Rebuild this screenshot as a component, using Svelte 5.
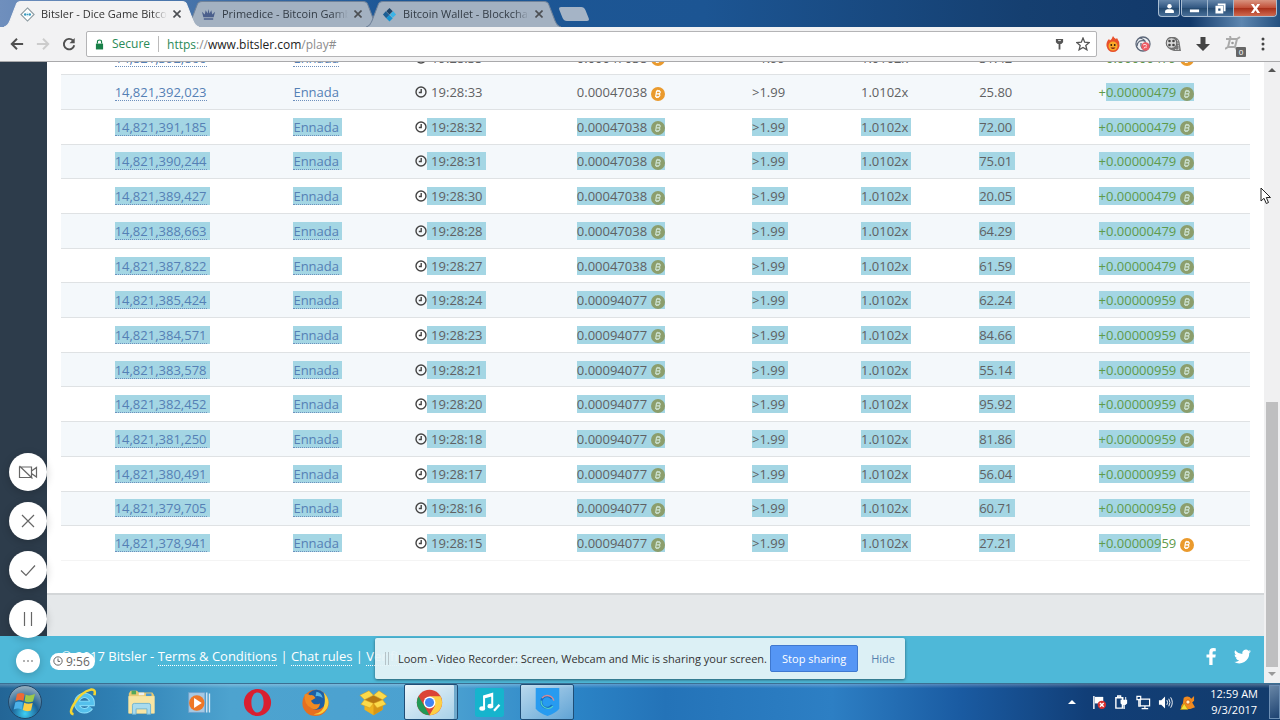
<script lang="ts">
    const rows = [
        { id: "14,821,392,866", time: "19:28:35", amount: "0.00047038", roll: "31.42", profit: "0.00000479", picked: "none" },
        { id: "14,821,392,023", time: "19:28:33", amount: "0.00047038", roll: "25.80", profit: "0.00000479", picked: "end" },
        { id: "14,821,391,185", time: "19:28:32", amount: "0.00047038", roll: "72.00", profit: "0.00000479", picked: "all" },
        { id: "14,821,390,244", time: "19:28:31", amount: "0.00047038", roll: "75.01", profit: "0.00000479", picked: "all" },
        { id: "14,821,389,427", time: "19:28:30", amount: "0.00047038", roll: "20.05", profit: "0.00000479", picked: "all" },
        { id: "14,821,388,663", time: "19:28:28", amount: "0.00047038", roll: "64.29", profit: "0.00000479", picked: "all" },
        { id: "14,821,387,822", time: "19:28:27", amount: "0.00047038", roll: "61.59", profit: "0.00000479", picked: "all" },
        { id: "14,821,385,424", time: "19:28:24", amount: "0.00094077", roll: "62.24", profit: "0.00000959", picked: "all" },
        { id: "14,821,384,571", time: "19:28:23", amount: "0.00094077", roll: "84.66", profit: "0.00000959", picked: "all" },
        { id: "14,821,383,578", time: "19:28:21", amount: "0.00094077", roll: "55.14", profit: "0.00000959", picked: "all" },
        { id: "14,821,382,452", time: "19:28:20", amount: "0.00094077", roll: "95.92", profit: "0.00000959", picked: "all" },
        { id: "14,821,381,250", time: "19:28:18", amount: "0.00094077", roll: "81.86", profit: "0.00000959", picked: "all" },
        { id: "14,821,380,491", time: "19:28:17", amount: "0.00094077", roll: "56.04", profit: "0.00000959", picked: "all" },
        { id: "14,821,379,705", time: "19:28:16", amount: "0.00094077", roll: "60.71", profit: "0.00000959", picked: "all" },
        { id: "14,821,378,941", time: "19:28:15", amount: "0.00094077", roll: "27.21", profit: "0.00000959", picked: "start" },
    ];

    const tabs = [
        { title: "Bitsler - Dice Game Bitcoin", icon: "bitsler", active: true },
        { title: "Primedice - Bitcoin Gambling", icon: "crown", active: false },
        { title: "Bitcoin Wallet - Blockchain", icon: "blockchain", active: false },
    ];

    const url = "https://www.bitsler.com/play#";
</script>

{#snippet coin(dim: boolean)}
    <svg class="coin" class:dim viewBox="0 0 14 14" aria-hidden="true">
        <circle cx="7" cy="7" r="7" />
        <path
            d="M5.6 3.8 L4.6 10 M5.4 4.2 H8 Q9.6 4.4 9.1 5.8 Q8.7 6.8 7.4 6.9 H5.3 M7.4 6.9 Q9.3 7.2 8.7 8.7 Q8.2 9.8 6.8 9.8 H4.7 M6.8 2.9 L6.6 4 M8.2 3 L8 4.2 M5.8 9.8 L5.6 11 M7.2 9.8 L7 11"
        />
    </svg>
{/snippet}

<div class="screen">
    <header class="titlebar">
        <nav class="tabs" aria-label="Tabs">
            {#each tabs as tab}
                <div class="tab" class:active={tab.active}>
                    <svg class="tab-shape" viewBox="0 0 195 25" preserveAspectRatio="none" aria-hidden="true">
                        <path d="M0 25 Q4 24 6 19 L12 4 Q13 0.5 17 0.5 H178 Q182 0.5 183 4 L189 19 Q191 24 195 25" />
                    </svg>
                    <svg class="favicon" viewBox="0 0 16 16" aria-hidden="true">
                        {#if tab.icon === "bitsler"}
                            <path d="M8 1 L15 8 L8 15 L1 8 Z" fill="#fff" stroke="#8c9aa0" stroke-width="1.2" />
                            <path d="M8 5 L11.5 8 L8 11 L4.5 8 Z" fill="#e4f3f8" />
                            <circle cx="5.5" cy="8" r="1.3" fill="#3d9cc0" />
                            <circle cx="10.5" cy="8" r="1.3" fill="#3d9cc0" />
                            <circle cx="8" cy="8" r="0.8" fill="#3d9cc0" />
                        {:else if tab.icon === "crown"}
                            <path
                                d="M1 5 L4 8 L5 3.5 L7 7 L8 2 L9 7 L11 3.5 L12 8 L15 5 L13.5 11 H2.5 Z M3 12 H13 V13.5 H3 Z"
                                fill="#4b5f8c"
                            />
                        {:else}
                            <path d="M8 1 L11.5 4.5 L8 8 L4.5 4.5 Z" fill="#1f4467" />
                            <path d="M4 4.5 L8 8.5 L4.5 12 L1 8 Z" fill="#1d5f94" />
                            <path d="M12 4.5 L15 8 L11.5 11.5 L8.5 8 Z" fill="#3cb4e6" />
                            <path d="M8 8.5 L11.5 12 L8 15.5 L4.5 12 Z" fill="#1593d2" />
                        {/if}
                    </svg>
                    <span class="tab-title">{tab.title}</span>
                    <button class="tab-close" aria-label="Close tab">
                        <svg viewBox="0 0 8 8"><path d="M0.5 0.5 L7.5 7.5 M7.5 0.5 L0.5 7.5" /></svg>
                    </button>
                </div>
            {/each}
            <button class="new-tab" aria-label="New tab"></button>
        </nav>
        <div class="window-buttons">
            <button class="user" aria-label="Profile">
                <svg viewBox="0 0 10 10"><circle cx="5" cy="3" r="2" /><path d="M1 9 V7.5 Q1 6 3 5.7 H7 Q9 6 9 7.5 V9 Z" /></svg>
            </button>
            <div class="group">
                <button aria-label="Minimize"><svg viewBox="0 0 12 12"><path d="M1 7 H11 V10 H1 Z" /></svg></button>
                <button aria-label="Restore">
                    <svg viewBox="0 0 12 12">
                        <path fill-rule="evenodd" d="M3 0.5 H11.5 V9 H9.5 V2.5 H3 Z M0.5 3 H9 V11.5 H0.5 Z M3.5 6 V8.5 H6 V6 Z" />
                    </svg>
                </button>
                <button class="close" aria-label="Close">
                    <svg viewBox="0 0 12 12"><path d="M1 1 H4 L6 4 L8 1 H11 L7.7 6 L11 11 H8 L6 8 L4 11 H1 L4.3 6 Z" /></svg>
                </button>
            </div>
        </div>
    </header>

    <div class="toolbar">
        <button class="nav-btn" aria-label="Back">
            <svg viewBox="0 0 16 16"><path d="M15 8 H2 M8 2 L2 8 L8 14" /></svg>
        </button>
        <button class="nav-btn off" aria-label="Forward" disabled>
            <svg viewBox="0 0 16 16"><path d="M1 8 H13 M8 2 L14 8 L8 14" /></svg>
        </button>
        <button class="nav-btn" aria-label="Reload">
            <svg viewBox="0 0 16 16">
                <path d="M12.5 4 A6 6 0 1 0 14 9.5" />
                <path d="M14.5 1 V7 H8.5 Z" class="solid" />
            </svg>
        </button>
        <div class="omnibox">
            <svg class="lock" viewBox="0 0 10 12" aria-hidden="true">
                <path d="M1 5 H9 V11.5 H1 Z" fill="#188048" />
                <path d="M2.7 5 V3 Q2.7 1 5 1 Q7.3 1 7.3 3 V5" fill="none" stroke="#188048" stroke-width="1.3" />
            </svg>
            <span class="secure">Secure</span>
            <span class="address" role="textbox" aria-label="Address" aria-readonly="true" tabindex="0"
                ><span class="scheme">{url.slice(0, 5)}</span><span class="rest">{url.slice(5, 8)}</span>{url.slice(
                    8,
                    23,
                )}<span class="rest">{url.slice(23)}</span></span
            >
            <svg class="key" viewBox="0 0 10 12" aria-hidden="true">
                <path d="M1 0.5 H9 V4 L7 6 H3 L1 4 Z M4 6 H6 V12 H4 Z" fill="#555" />
                <path d="M3.5 2.2 H6.5" stroke="#fff" />
            </svg>
            <svg class="star" viewBox="0 0 14 14" aria-hidden="true">
                <path d="M7 1 L8.7 5.2 L13.2 5.5 L9.8 8.4 L10.9 12.8 L7 10.4 L3.1 12.8 L4.2 8.4 L0.8 5.5 L5.3 5.2 Z" />
            </svg>
        </div>
        <div class="extensions">
            <button aria-label="Flame">
                <svg viewBox="0 0 16 16">
                    <path d="M8 0 Q9 2 11 3 L12 2 Q15 6 14.5 10 Q13 16 8 16 Q3 16 1.5 10 Q1 6 4 3 L5 4.5 Q7 3 8 0 Z" fill="#e8502a" />
                    <circle cx="8" cy="10" r="4.5" fill="#fba928" />
                    <circle cx="6.3" cy="9" r="0.9" fill="#2d1a10" />
                    <circle cx="9.7" cy="9" r="0.9" fill="#2d1a10" />
                    <path d="M5.5 11.5 Q8 14.5 10.5 11.5 Z" fill="#7b2412" />
                </svg>
            </button>
            <button aria-label="Loom">
                <svg viewBox="0 0 16 16">
                    <circle cx="8" cy="8" r="7" fill="#eef0f4" stroke="#5b6678" stroke-width="1.3" />
                    <path d="M5 2 Q12 4 10 9 M2 10 Q3 3 10 5 M12 13 Q5 14 6 7" fill="none" stroke="#5b6678" stroke-width="1.3" />
                    <circle cx="10.5" cy="10.5" r="4.2" fill="#ed5b64" />
                    <path d="M8 9 Q10 7.5 12 9.5 M9 12.5 Q9 10.5 12 11" fill="none" stroke="#fff" stroke-width="0.8" />
                </svg>
            </button>
            <button aria-label="Film reel">
                <svg viewBox="0 0 16 16">
                    <path d="M5 1 H10 Q15 3 15 9 L16 15 H9 Q1 13 1 7 Q1 2 5 1 Z" fill="#777" />
                    <circle cx="6.5" cy="7" r="5.3" fill="#d6d6d6" stroke="#666" />
                    <circle cx="4.5" cy="5" r="1.3" fill="#444" />
                    <circle cx="8.5" cy="5" r="1.3" fill="#444" />
                    <circle cx="4.5" cy="9" r="1.3" fill="#444" />
                    <circle cx="8.5" cy="9" r="1.3" fill="#444" />
                    <path d="M12.5 4 L14 14 M10 13.5 H15" stroke="#ccc" stroke-dasharray="1.5 1" />
                </svg>
            </button>
            <button aria-label="Download">
                <svg viewBox="0 0 16 16"><path d="M5.5 1 H10.5 V8 H15 L8 15 L1 8 H5.5 Z" fill="#444" /></svg>
            </button>
            <button class="counter" aria-label="Blocked items">
                <svg viewBox="0 0 16 16">
                    <path d="M5 3 H12 L10 11 H3 Z M1 3 L5 3 M12 3 L15 1 M3 11 L0 13 M6 4 L5 0 M10 11 L12 14" fill="none" stroke="#aaa" stroke-width="2" />
                    <circle cx="7.5" cy="7" r="1.3" fill="#999" />
                </svg>
                <span class="count">0</span>
            </button>
            <button aria-label="Menu">
                <svg viewBox="0 0 16 16" fill="#444">
                    <circle cx="8" cy="3" r="1.5" /><circle cx="8" cy="8" r="1.5" /><circle cx="8" cy="13" r="1.5" />
                </svg>
            </button>
        </div>
    </div>

    <div class="viewport">
        <div class="page">
            <div class="body-row">
                <aside class="sidebar"></aside>
                <div class="content">
                    <main class="card">
                        <table>
                            <colgroup>
                                <col class="c-id" /><col class="c-user" /><col class="c-time" /><col class="c-amount" />
                                <col class="c-target" /><col class="c-payout" /><col class="c-roll" /><col class="c-profit" />
                            </colgroup>
                            <tbody>
                                {#each rows as row}
                                    {@const on = row.picked === "all" || row.picked === "start"}
                                    <tr>
                                        <td><span class="trail" class:sel={on}><a href="#bet">{row.id}</a></span></td>
                                        <td><span class="trail" class:sel={on}><a href="#user">Ennada</a></span></td>
                                        <td>
                                            <span class="cell">
                                                <svg class="clock" viewBox="0 0 12 12" aria-hidden="true">
                                                    <circle cx="6" cy="6" r="5" />
                                                    <path d="M6.2 3 V6.5 H3.8" />
                                                </svg><span class="trail lead" class:sel={on}>{row.time}</span>
                                            </span>
                                        </td>
                                        <td><span class="cell" class:sel={on}>{row.amount}{@render coin(on)}</span></td>
                                        <td><span class="trail" class:sel={on}>&gt;1.99</span></td>
                                        <td><span class="trail" class:sel={on}>1.0102x</span></td>
                                        <td><span class="trail" class:sel={on}>{row.roll}</span></td>
                                        <td class="profit">
                                            {#if row.picked === "end"}
                                                <span class="cell">+<span class="cell sel">{row.profit}{@render coin(true)}</span></span>
                                            {:else if row.picked === "start"}
                                                <span class="cell"
                                                    ><span class="sel">+{row.profit.slice(0, 8)}</span>{row.profit.slice(8)}{@render coin(
                                                        false,
                                                    )}</span
                                                >
                                            {:else}
                                                <span class="cell" class:sel={on}>+{row.profit}{@render coin(on)}</span>
                                            {/if}
                                        </td>
                                    </tr>
                                {/each}
                            </tbody>
                        </table>
                    </main>
                </div>
            </div>
            <footer class="site-footer">
                <p>
                    © 2017 Bitsler - <a href="#terms">Terms &amp; Conditions</a> | <a href="#chat">Chat rules</a> |
                    <a href="#verify">Verification</a> | <a href="#faq">FAQ</a> | <a href="#contact">Contact</a>
                </p>
                <div class="social">
                    <a href="#facebook" aria-label="Facebook">
                        <svg viewBox="0 0 16 16"><path d="M12 0.2 V3 H10.3 Q9 3 9 4.3 V6 H12 L11.6 8.9 H9 V16 H5.9 V8.9 H3.3 V6 H5.9 V3.9 Q5.9 0 9.7 0 Z" /></svg>
                    </a>
                    <a href="#twitter" aria-label="Twitter">
                        <svg viewBox="0 0 24 24">
                            <path
                                d="M24 4.6a10 10 0 0 1-2.8.8 5 5 0 0 0 2.2-2.7 10 10 0 0 1-3.1 1.2 4.9 4.9 0 0 0-8.4 4.5A14 14 0 0 1 1.7 3.2a4.9 4.9 0 0 0 1.5 6.6 4.9 4.9 0 0 1-2.2-.6 4.9 4.9 0 0 0 3.9 4.9 5 5 0 0 1-2.2.1 4.9 4.9 0 0 0 4.6 3.4A9.9 9.9 0 0 1 0 19.5 14 14 0 0 0 21.5 7.1 10 10 0 0 0 24 4.6z"
                            />
                        </svg>
                    </a>
                </div>
            </footer>
        </div>
        <div class="scrollbar" aria-hidden="true">
            <span class="arrow up"></span>
            <span class="thumb"></span>
            <span class="arrow down"></span>
        </div>

        <div class="recorder">
            <button aria-label="Camera off">
                <svg viewBox="0 0 20 20"><path d="M1.5 5 H13.5 V15.5 H1.5 Z M13.5 9 L18.5 5.5 V15 L13.5 11.5 M1.5 4 L14.5 16.5" /></svg>
            </button>
            <button aria-label="Cancel"><svg viewBox="0 0 20 20"><path d="M4 4 L16 16 M16 4 L4 16" /></svg></button>
            <button aria-label="Finish"><svg viewBox="0 0 20 20"><path d="M3 10.5 L8 15.5 L17 5.5" /></svg></button>
            <button aria-label="Pause"><svg viewBox="0 0 20 20"><path d="M6.5 3 V17 M13.5 3 V17" /></svg></button>
            <div class="more-row">
                <button class="small" aria-label="More">
                    <svg viewBox="0 0 12 12"><path d="M1 6 H3 M5 6 H7 M9 6 H11" /></svg>
                </button>
                <span class="timer">
                    <svg viewBox="0 0 12 12"><circle cx="6" cy="6" r="5" /><path d="M6 3 V6.5 H8.5" /></svg>9:56
                </span>
            </div>
        </div>

        <div class="sharing">
            <span class="grip"></span>
            <span class="message">Loom - Video Recorder: Screen, Webcam and Mic is sharing your screen.</span>
            <button class="stop">Stop sharing</button>
            <a href="#hide">Hide</a>
        </div>
    </div>

    <svg class="pointer" viewBox="0 0 12 18" aria-hidden="true">
        <path d="M1 1 V14 L4 11.3 L6.3 16.5 L8.5 15.5 L6.3 10.5 H10.5 Z" />
    </svg>

    <div class="taskbar">
        <button class="start" aria-label="Start">
            <svg viewBox="0 0 36 36">
                <defs>
                    <radialGradient id="orb" cx="50%" cy="85%" r="80%">
                        <stop offset="0" stop-color="#3fd0f5" />
                        <stop offset="0.5" stop-color="#1c6296" />
                        <stop offset="1" stop-color="#8fa9bb" />
                    </radialGradient>
                </defs>
                <circle cx="18" cy="18" r="16.5" fill="url(#orb)" stroke="#21486b" />
                <path d="M10 10 Q14 8 17.5 10 L16.5 17 Q12 15 8.5 17 Z" fill="#ee6a35" />
                <path d="M18.7 10.5 Q22 12.5 28 10 L26 17.5 Q21 19 17.5 17.2 Z" fill="#9cc94a" />
                <path d="M8.2 18.5 Q12 16.5 16 18.5 L14.7 25.5 Q11 23.5 6.7 25.5 Z" fill="#4bb1e9" />
                <path d="M17.2 18.8 Q21 20.5 25.7 19 L24 26.5 Q19.5 28 15.8 26 Z" fill="#fbce45" />
            </svg>
        </button>
        <div class="apps">
            <button aria-label="Internet Explorer">
                <svg viewBox="0 0 32 32">
                    <path d="M24 21.5 A8.5 8.5 0 1 1 25.5 17 H10" fill="none" stroke="#8fe0fa" stroke-width="6" />
                    <path d="M24 21.5 A8.5 8.5 0 1 1 25.5 17 H10" fill="none" stroke="#55c0ec" stroke-width="4" />
                    <path d="M5 29 Q-1 28 6 17 Q14 4 24 1.800 Q30 1 28 8" fill="none" stroke="#f5d632" stroke-width="2.8" />
                </svg>
            </button>
            <button aria-label="Explorer">
                <svg viewBox="0 0 32 32">
                    <path d="M2 6 L4 3 H11 L13 5 H28 L30 8 V28 H2 Z" fill="#e7c971" />
                    <path d="M5 3 H10 V7 H5 Z" fill="#52a85a" /><path d="M13 5 H19 V8 H13 Z" fill="#eee" /><path d="M21 6 H27 V9 H21 Z" fill="#4c9ad2" />
                    <path d="M1.5 9 H30.5 V28 H1.5 Z" fill="#f8e5a3" />
                    <path d="M6 19 Q6 17 8 17 H24 Q26 17 26 19 V29 H22 V23 H10 V29 H6 Z" fill="#a9dbee" stroke="#6bb2d3" />
                </svg>
            </button>
            <button aria-label="Media Player">
                <svg viewBox="0 0 32 32">
                    <path d="M4 5 H22 V27 H4 Z" fill="#a5c9e4" stroke="#6ea2cb" />
                    <path d="M24 5 V27 M27 6 V27" stroke="#d8e9f5" stroke-width="1.5" />
                    <circle cx="13" cy="16.5" r="8.5" fill="#ee7726" />
                    <path d="M10 11 L18.5 16.5 L10 22 Z" fill="#fff" />
                </svg>
            </button>
            <button aria-label="Opera">
                <svg viewBox="0 0 32 32">
                    <path fill-rule="evenodd" d="M16 1 A15 15 0 1 0 16 31 A15 15 0 1 0 16 1 Z M16 5 C25 5 25 27 16 27 C7 27 7 5 16 5 Z" fill="#d91f30" />
                </svg>
            </button>
            <button aria-label="Firefox">
                <svg viewBox="0 0 32 32">
                    <circle cx="16" cy="16.5" r="14.5" fill="#e66f20" />
                    <circle cx="17" cy="13" r="11" fill="#1d5fa6" />
                    <path d="M4 7 Q7 6 10 8 Q14 7 16 11 L11 14 Q14 20 21 17 Q20 25 12 23 Q3 19 4 7 Z" fill="#f28a22" />
                    <path d="M25 5 Q33 13 29 22 Q23 31 14 29 Q25 27 26 17 Q27 11 25 5 Z" fill="#fbcf3b" />
                    <path d="M17 4 Q23 5 24 11 Q20 8 16 9 Z" fill="#56b4e4" />
                </svg>
            </button>
            <button aria-label="Box">
                <svg viewBox="0 0 32 32">
                    <path d="M6 13 L16 17 L26 13 V24 L16 30 L6 24 Z" fill="#eeb21f" />
                    <path d="M16 17 L26 13 V24 L16 30 Z" fill="#d69616" />
                    <path d="M6 13 L16 8 L26 13 L16 18 Z" fill="#b87912" />
                    <path d="M6 13 L1 8 L11 3 L16 8 Z M26 13 L31 9 L22 3 L16 8 Z M6 13 L2 18 L12 22 L16 17 Z M26 13 L30 18 L20 22 L16 17 Z" fill="#fcda4a" stroke="#d59b19" stroke-width="0.6" />
                </svg>
            </button>
            <button class="running stack" aria-label="Chrome">
                <svg viewBox="0 0 32 32">
                    <circle cx="16" cy="16" r="14" fill="#db4437" />
                    <path d="M3.9 9 L10.5 20 L16 30 A14 14 0 0 1 3.9 9 Z" fill="#219a56" />
                    <path d="M28.1 9 H16 L22 19.5 L16 30 A14 14 0 0 0 28.1 9 Z" fill="#fdcf45" />
                    <circle cx="16" cy="16" r="6.5" fill="#fff" />
                    <circle cx="16" cy="16" r="5" fill="#4285f4" />
                </svg>
            </button>
            <button aria-label="Music editor">
                <svg viewBox="0 0 32 32">
                    <rect x="0" y="0" width="32" height="32" rx="3" fill="#16b4cd" />
                    <path d="M10 22 V9 L19 6.5 V19 M10 10.5 L19 8" fill="none" stroke="#fff" stroke-width="2.2" />
                    <ellipse cx="8" cy="22.5" rx="3.2" ry="2.5" fill="#fff" /><ellipse cx="17" cy="20" rx="3.2" ry="2.5" fill="#fff" />
                    <path d="M21 25 L27 18.5" stroke="#fff" stroke-width="2.5" />
                </svg>
            </button>
            <button class="running" aria-label="Shield">
                <svg viewBox="0 0 32 32">
                    <path d="M3 0 H29 V23 Q25 28 16 31 Q7 28 3 23 Z" fill="#279bf0" />
                    <path d="M21 12 A6.5 6.5 0 1 0 21 19" fill="none" stroke="#166fc2" stroke-width="2.5" />
                    <path d="M10 11 A7.5 7.5 0 0 1 23 14" fill="none" stroke="#d58c96" stroke-width="1.5" />
                    <path d="M9 14 A7.5 7.5 0 0 0 22 20" fill="none" stroke="#53d5ca" stroke-width="1.3" />
                </svg>
            </button>
        </div>
        <div class="tray">
            <span class="expand"></span>
            <svg viewBox="0 0 16 16" aria-hidden="true">
                <path d="M2 1 V15" stroke="#fff" stroke-width="1.5" /><path d="M3 2 H12 V9 H3 Z" fill="#fff" />
                <circle cx="10.5" cy="10.5" r="4.5" fill="#d8302f" /><path d="M8.5 8.5 L12.5 12.5 M12.5 8.5 L8.5 12.5" stroke="#fff" stroke-width="1.5" />
            </svg>
            <svg viewBox="0 0 16 16" aria-hidden="true">
                <path d="M2 3 H9 V14 H2 Z M4 1 H7 V3 H4 Z" fill="none" stroke="#fff" stroke-width="1.5" />
                <path d="M7 5 H14 V9 Q12 11 10.5 11 Q8 10 7 9 Z M9 2 H10 V5 H9 Z M12 2 H13 V5 H12 Z M10 10 H11.5 V15 H10 Z" fill="#fff" />
            </svg>
            <svg viewBox="0 0 16 16" aria-hidden="true">
                <path d="M4.5 4.5 H14.5 V11.5 H4.5 Z M9.5 12 V14 M6 14.5 H13 M1 1.5 H5 V5 H1 Z M3 5 V12 H5" fill="none" stroke="#fff" stroke-width="1.3" />
            </svg>
            <svg viewBox="0 0 16 16" aria-hidden="true">
                <path d="M1 5.5 H3.5 L7.5 1.5 V14.5 L3.5 10.5 H1 Z" fill="#fff" />
                <path d="M9.5 5.5 Q11 8 9.5 10.5 M11.5 4 Q14 8 11.5 12 M13.5 2.5 Q17 8 13.5 13.5" fill="none" stroke="#fff" />
            </svg>
            <svg viewBox="0 0 16 16" aria-hidden="true">
                <path d="M4 3 Q9 0 12 4 L15 1 V6 L13 8 L16 13 L11 15 H2 Q0 12 3 9 Z" fill="#f08a20" />
                <circle cx="8.5" cy="7.5" r="2.3" fill="#fff0c8" stroke="#d8610c" />
                <path d="M4.5 9 L8.5 15.5 H0.5 Z" fill="#f7df35" stroke="#b08a12" stroke-width="0.6" />
            </svg>
            <div class="time"><span>12:59 AM</span><span>9/3/2017</span></div>
            <button class="peek" aria-label="Show desktop"></button>
        </div>
    </div>
</div>

<style>
    :global(body) {
        margin: 0;
        overflow: hidden;
    }

    .screen {
        position: relative;
        display: flex;
        flex-direction: column;
        height: 100vh;
        font-family: "Open Sans", sans-serif;
        font-size: 13px;
        color: #5f6163;
    }

    button {
        display: flex;
        align-items: center;
        justify-content: center;
        flex: none;
        padding: 0;
        border: 0;
        background: none;
        font: inherit;
    }

    svg {
        display: block;
        flex: none;
    }

    .titlebar {
        display: flex;
        justify-content: space-between;
        height: 27px;
        background: linear-gradient(90deg, #6f8fbd 0, #1d5796 30%, #1c5593 55%, #153f70 80%, #12396a 93%, #5d86b0 97%, #24507f 100%);
    }

    .tabs {
        display: flex;
        align-items: flex-end;
        padding-left: 4px;
    }

    .tab {
        position: relative;
        display: flex;
        align-items: center;
        box-sizing: border-box;
        width: 195px;
        height: 26px;
        margin-right: -14px;
        padding: 0 18px 0 16px;
        gap: 6px;
        color: #333c46;
    }

    .tab.active {
        z-index: 1;
        color: #333;
    }

    .tab-shape {
        position: absolute;
        inset: 0;
        width: 100%;
        height: 100%;
        fill: #a3b1c1;
        stroke: #71839a;
    }

    .active .tab-shape {
        fill: #f2f2f3;
        stroke: #f2f2f3;
    }

    .favicon {
        position: relative;
        width: 15px;
        height: 15px;
    }

    .tab-title {
        position: relative;
        flex: 1;
        overflow: hidden;
        white-space: nowrap;
        font-size: 11px;
        line-height: 16px;
        mask-image: linear-gradient(90deg, #000 88%, transparent);
    }

    .tab-close {
        position: relative;
    }

    .tab-close svg {
        width: 8px;
        height: 8px;
        stroke: #4c4f53;
        stroke-width: 1.6;
    }

    .new-tab {
        align-self: center;
        width: 26px;
        height: 14px;
        margin-left: 14px;
        border-radius: 3px;
        background: #a5b4c6;
        transform: skewX(22deg);
    }

    .window-buttons {
        display: flex;
        align-items: flex-start;
        gap: 1px;
        padding-right: 3px;
    }

    .window-buttons button {
        box-sizing: border-box;
        width: 26px;
        height: 17px;
        border-right: 1px solid #9fb5cc;
        background: linear-gradient(#6586aa, #2f5580 50%, #24496f 51%, #486f99);
    }

    .window-buttons .user {
        width: 22px;
        border: 1px solid #a9bdd2;
        border-top: 0;
        border-radius: 0 0 4px 4px;
    }

    .group {
        display: flex;
        overflow: hidden;
        border: 1px solid #a9bdd2;
        border-top: 0;
        border-radius: 0 0 4px 4px;
    }

    .group button {
        height: 16px;
    }

    .window-buttons .close {
        width: 42px;
        border: 0;
        background: linear-gradient(#d99480, #c14e37 50%, #a82f19 51%, #cf6a50);
    }

    .window-buttons svg {
        width: 11px;
        height: 11px;
        fill: #fff;
    }

    .toolbar {
        display: flex;
        align-items: center;
        box-sizing: border-box;
        height: 35px;
        padding: 0 9px 0 8px;
        border-bottom: 1px solid #a9a9ab;
        background: #f2f2f3;
    }

    .nav-btn {
        width: 18px;
        margin-right: 8px;
    }

    .nav-btn svg {
        width: 14px;
        height: 14px;
        fill: none;
        stroke: #505050;
        stroke-width: 2.2;
    }

    .nav-btn .solid {
        fill: #505050;
        stroke: none;
    }

    .nav-btn.off svg {
        stroke: #ccc;
    }

    .omnibox {
        display: flex;
        flex: 1;
        align-items: center;
        box-sizing: border-box;
        height: 26px;
        padding: 0 6px 0 8px;
        border: 1px solid #b4b4b6;
        border-radius: 2px;
        background: #fff;
        font-size: 12px;
    }

    .lock {
        width: 9px;
        height: 11px;
        margin-right: 8px;
    }

    .secure {
        padding-right: 8px;
        border-right: 1px solid #bbb;
        color: #2a8a57;
        line-height: 16px;
    }

    .address {
        flex: 1;
        padding-left: 8px;
        color: #222;
        outline: 0;
    }

    .scheme {
        color: #2a8a57;
    }

    .rest {
        color: #8c8c8c;
    }

    .key {
        width: 9px;
        height: 12px;
        margin-right: 12px;
    }

    .star {
        width: 14px;
        height: 14px;
        fill: none;
        stroke: #555;
        stroke-width: 1.3;
    }

    .extensions {
        display: flex;
        gap: 14px;
        padding-left: 8px;
    }

    .extensions button {
        position: relative;
        width: 16px;
        height: 16px;
    }

    .extensions svg {
        width: 16px;
        height: 16px;
    }

    .count {
        position: absolute;
        right: -5px;
        bottom: -5px;
        width: 10px;
        height: 10px;
        border-radius: 1px;
        background: #666;
        color: #fff;
        font-size: 8px;
        line-height: 10px;
    }

    .viewport {
        position: relative;
        display: flex;
        flex: 1;
        min-height: 0;
    }

    .page {
        display: flex;
        flex: 1;
        flex-direction: column;
        min-width: 0;
    }

    .body-row {
        display: flex;
        flex: 1;
        min-height: 0;
    }

    .sidebar {
        flex: none;
        width: 47px;
        background: #2d3c4b;
    }

    .content {
        display: flex;
        flex: 1;
        flex-direction: column;
        justify-content: flex-end;
        overflow: hidden;
        padding-bottom: 41px;
        background: #e5e8ea;
    }

    .card {
        padding: 0 14px 32px;
        border-bottom: 2px solid #d3d6d8;
        background: #fff;
    }

    table {
        width: 100%;
        height: 520px;
        border-collapse: collapse;
        table-layout: fixed;
    }

    .c-id { width: 199px; }
    .c-user { width: 112px; }
    .c-time { width: 153px; }
    .c-amount { width: 191px; }
    .c-target { width: 104px; }
    .c-payout { width: 128px; }
    .c-roll { width: 94px; }
    .c-profit { width: 207px; }

    td {
        padding: 0;
        border-bottom: 1px solid #dfe2e4;
        line-height: 18px;
        text-align: center;
        white-space: nowrap;
    }

    tr:last-child td {
        border-bottom-color: #f4f4f4;
    }

    tr:nth-child(even) {
        background: #f4f8fb;
    }

    td span {
        display: inline-block;
    }

    td a {
        display: block;
        height: 17px;
        border-bottom: 1px dotted #6d90bd;
        color: #5580b5;
        text-decoration: none;
    }

    td .cell {
        display: inline-flex;
        align-items: center;
        vertical-align: top;
    }

    td .trail {
        margin-right: -3px;
        padding-right: 3px;
    }

    td .lead {
        padding-left: 4px;
    }

    .sel {
        background: #a4d6e4;
    }

    .profit {
        color: #5f9a4b;
    }

    .clock {
        width: 12px;
        height: 12px;
        fill: none;
        stroke: #444;
        stroke-width: 1.4;
    }

    .coin {
        width: 14px;
        height: 14px;
        margin: 3px 0 0 4px;
        fill: #ea9a2d;
    }

    .coin path {
        fill: none;
        stroke: #fff;
        stroke-width: 1.2;
    }

    .coin.dim {
        fill: #8c9e6c;
    }

    .coin.dim path {
        stroke: #cbe0cf;
    }

    .site-footer {
        display: flex;
        align-items: center;
        justify-content: space-between;
        height: 47px;
        padding: 0 13px 0 61px;
        background: #4eb8d8;
        color: #fff;
    }

    .site-footer p {
        margin: 0 0 6px;
        line-height: 17px;
        white-space: nowrap;
    }

    .site-footer p a {
        border-bottom: 1px dotted #fff;
        color: #fff;
        text-decoration: none;
    }

    .social {
        display: flex;
        gap: 14px;
        margin-bottom: 6px;
    }

    .social svg {
        width: 17px;
        height: 17px;
        fill: #fff;
    }

    .scrollbar {
        display: flex;
        flex: none;
        flex-direction: column;
        align-items: center;
        width: 16px;
        background: #f0f0f1;
    }

    .arrow {
        flex: none;
        border: 4px solid transparent;
    }

    .arrow.up {
        margin-top: 2px;
        border-bottom-color: #555;
    }

    .arrow.down {
        margin-top: 5px;
        margin-bottom: 3px;
        border-top-color: #999;
    }

    .thumb {
        width: 12px;
        height: 265px;
        margin-top: auto;
        background: #bfbfc0;
    }

    .recorder {
        position: absolute;
        bottom: 10px;
        left: 9px;
        display: flex;
        flex-direction: column;
        gap: 11px;
    }

    .recorder button {
        width: 38px;
        height: 38px;
        border-radius: 50%;
        background: #fff;
        box-shadow: 0 2px 8px rgba(0, 0, 0, 0.2);
    }

    .recorder svg {
        width: 20px;
        height: 20px;
        fill: none;
        stroke: #666;
        stroke-width: 1.2;
    }

    .more-row {
        display: flex;
        align-items: center;
        gap: 10px;
        padding-left: 7px;
    }

    .recorder .small {
        width: 24px;
        height: 24px;
    }

    .recorder .small svg {
        width: 12px;
        height: 12px;
    }

    .timer {
        display: flex;
        align-items: center;
        gap: 3px;
        height: 17px;
        padding: 0 5px 0 3px;
        border-radius: 9px;
        background: #fff;
        color: #666;
        font-size: 12px;
        line-height: 17px;
    }

    .recorder .timer svg {
        width: 10px;
        height: 10px;
    }

    .sharing {
        position: absolute;
        bottom: 4px;
        left: 50%;
        display: flex;
        align-items: center;
        box-sizing: border-box;
        width: 530px;
        height: 41px;
        padding: 0 10px 0 10px;
        border-radius: 2px;
        background: rgba(229, 243, 247, 0.94);
        box-shadow: 0 1px 3px rgba(0, 0, 0, 0.5);
        color: #333;
        font-size: 11px;
        white-space: nowrap;
        transform: translateX(-50%);
    }

    .grip {
        width: 2px;
        height: 13px;
        margin-right: 9px;
        border: solid #b5c3c8;
        border-width: 0 1px;
    }

    .message {
        flex: 1;
    }

    .stop {
        width: 88px;
        height: 27px;
        margin-right: 13px;
        border: 1px solid #3f78cf;
        border-radius: 2px;
        background: #5596f5;
        color: #fff;
    }

    .sharing a {
        color: #5681ae;
        text-decoration: none;
    }

    .pointer {
        position: absolute;
        top: 187px;
        left: 1260px;
        width: 12px;
        height: 18px;
        fill: #fff;
        stroke: #222;
    }

    .taskbar {
        display: flex;
        align-items: center;
        box-sizing: border-box;
        height: 37px;
        border-top: 1px solid #3b6f92;
        background:
            linear-gradient(rgba(255, 255, 255, 0.25), transparent 12%),
            linear-gradient(90deg, #236596 0, #2f80b4 9%, #4da3cf 18%, #4ba1d1 35%, #2c86c8 44%, #2473b8 52%, #2d7fc4 65%, #1a5ba2 75%, #113e77 85%, #133c6c 100%);
    }

    .start {
        margin-left: 7px;
    }

    .start svg {
        width: 36px;
        height: 36px;
    }

    .apps {
        display: flex;
        flex: 1;
        gap: 4px;
        margin-left: 13px;
    }

    .apps button {
        box-sizing: border-box;
        width: 54px;
        height: 36px;
    }

    .apps svg {
        width: 29px;
        height: 29px;
    }

    .apps .running {
        border: 1px solid #1f4e77;
        border-radius: 2px;
        background: linear-gradient(150deg, rgba(255, 255, 255, 0.65), rgba(255, 255, 255, 0.25));
    }

    .apps .stack {
        padding-right: 4px;
        background: linear-gradient(150deg, rgba(255, 255, 255, 0.9), rgba(255, 255, 255, 0.5));
        box-shadow: inset -3px 0 0 #6ea9cc;
    }

    .tray {
        display: flex;
        align-items: center;
        gap: 7px;
        height: 100%;
        color: #fff;
        font-size: 11px;
    }

    .tray svg {
        width: 15px;
        height: 15px;
    }

    .expand {
        margin: 0 9px 4px 0;
        border: 4px solid transparent;
        border-bottom-color: #fff;
    }

    .time {
        display: flex;
        flex-direction: column;
        align-items: center;
        margin: 0 4px 0 8px;
        line-height: 16px;
    }

    .peek {
        width: 11px;
        height: 34px;
        border: 1px solid #6d8fb4;
        background: linear-gradient(150deg, #6886a6, #1d4271);
    }
</style>
